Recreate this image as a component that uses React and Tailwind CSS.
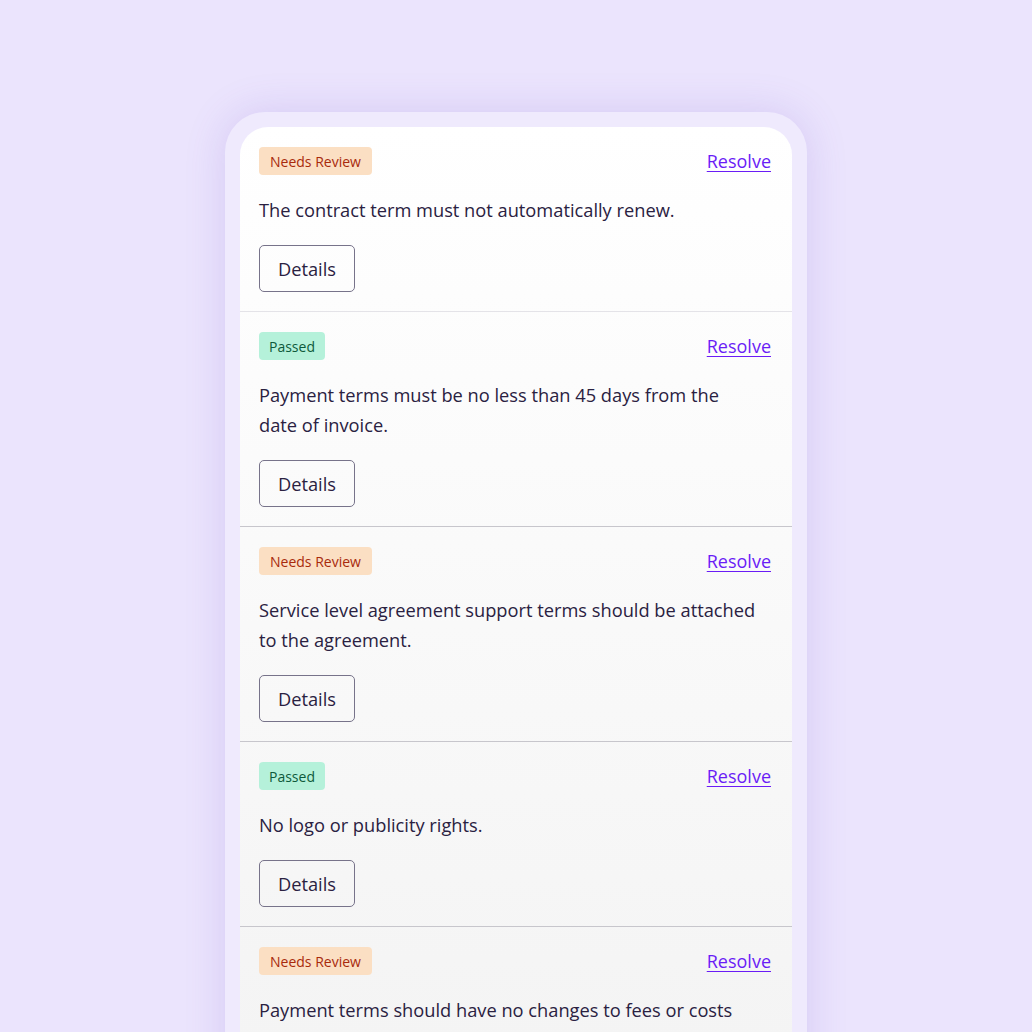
import React from "react";

const rules = [
  { status: "review", text: "The contract term must not automatically renew.", border: "border-[#e4e3e8]" },
  { status: "passed", text: "Payment terms must be no less than 45 days from the date of invoice.", border: "border-[#c7c6cc]" },
  { status: "review", text: "Service level agreement support terms should be attached to the agreement.", border: "border-[#c7c6cc]" },
  { status: "passed", text: "No logo or publicity rights.", border: "border-[#c7c6cc]" },
  { status: "review", text: "Payment terms should have no changes to fees or costs during the term.", border: "border-[#c7c6cc]" },
];

function Badge({ status }) {
  if (status === "passed") {
    return (
      <span className="inline-flex items-center h-[28px] px-[10px] rounded-[4px] bg-[#b5f1da] text-[#0d5a3b] text-[14px]">
        Passed
      </span>
    );
  }
  return (
    <span className="inline-flex items-center h-[28px] px-[11px] rounded-[4px] bg-[#fbdfc3] text-[#a82a0c] text-[14px]">
      Needs Review
    </span>
  );
}

function Row({ rule, last }) {
  return (
    <div className={`pl-[19px] pr-[21px] pt-5 pb-[19px] ${last ? "" : "border-b " + rule.border}`}>
      <div className="flex items-center justify-between">
        <Badge status={rule.status} />
        <a href="#" className="text-[18px] text-[#6a1cf6] underline underline-offset-[3px] decoration-1 mt-[1px]">
          Resolve
        </a>
      </div>
      <p className="mt-5 max-w-[500px] text-[18.25px] leading-[30px] text-[#2a2141]">{rule.text}</p>
      <button className="mt-5 w-[96px] h-[47px] rounded-[5px] border border-[#77738a] text-[18.25px] font-medium text-[#2a2141]">
        Details
      </button>
    </div>
  );
}

export default function App() {
  return (
    <div
      className="h-[1032px] overflow-hidden bg-[#ebe4fd] flex justify-center pt-[112px]"
      style={{ fontFamily: "'Open Sans', 'Noto Sans', sans-serif" }}
    >
      <div className="w-[582px] h-[1100px] shrink-0 rounded-t-[40px] bg-[#efeafd] p-[15px] pb-0 shadow-[0_0_40px_rgba(110,80,200,0.18)]">
        <div className="rounded-t-[28px] overflow-hidden h-full bg-gradient-to-b from-white to-[#f2f2f2]">
          {rules.map((r, i) => (
            <Row key={i} rule={r} last={i === rules.length - 1} />
          ))}
        </div>
      </div>
    </div>
  );
}
